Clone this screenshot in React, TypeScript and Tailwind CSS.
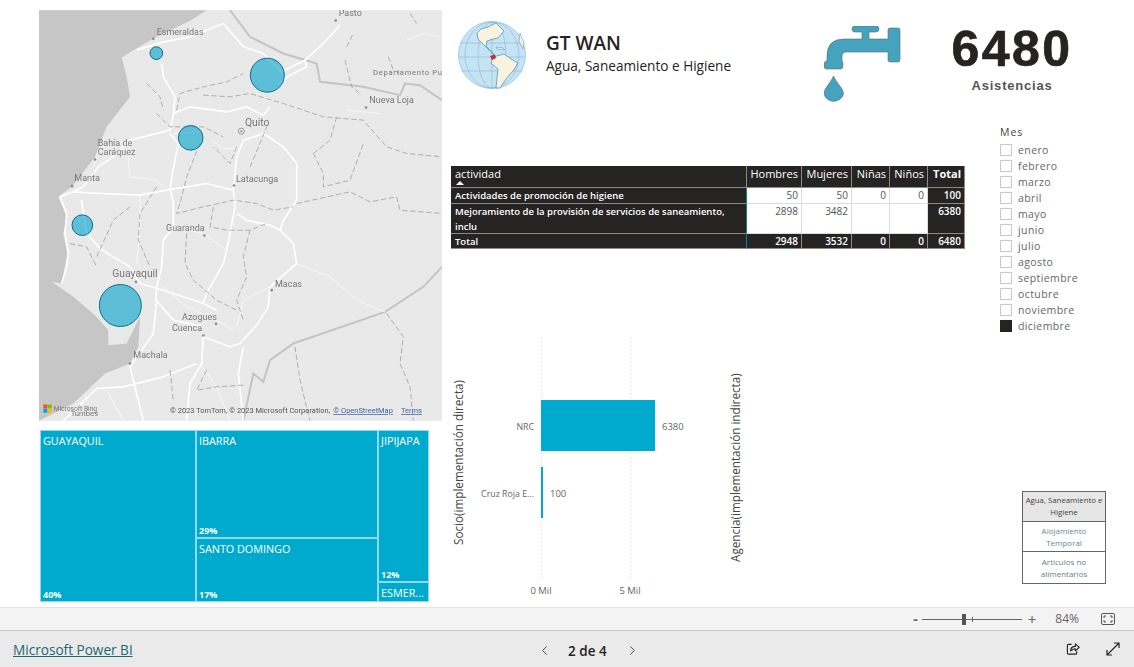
import { ChevronLeft, ChevronRight } from "lucide-react";

const meses = ["enero", "febrero", "marzo", "abril", "mayo", "junio", "julio", "agosto", "septiembre", "octubre", "noviembre", "diciembre"];

// el mapa usa coordenadas de 3x
const carreteras = [
  "M320 150 L400 125 L480 110 L580 70 L640 140 L700 160 L755 215 L825 180 L880 130 L930 75",
  "M825 180 L830 200 L780 225 L745 250",
  "M395 190 L400 230 L435 290 L430 345 L420 390 L300 420 L250 470 L205 500 L160 560 L130 575 L90 590",
  "M420 400 L445 430 L435 480 L420 560 L430 610 L430 680 L400 720 L395 800 L380 860 L378 900 L430 960 L520 980",
  "M430 340 L480 320 L590 335 L650 320 L700 345 L720 320",
  "M90 590 L110 640 L105 700 L115 760 L110 800 L95 850",
  "M155 600 L160 640 L170 700 L210 745 L250 770 L300 800 L330 850 L400 870 L460 890 L520 910 L560 930",
  "M130 575 L210 580 L330 585 L410 570 L470 560 L530 550 L610 570",
  "M610 570 L615 620 L600 700 L590 750 L580 790 L530 880 L520 910",
  "M620 640 L650 660 L720 675 L750 690 L790 730 L800 790 L720 860 L715 920 L680 975 L630 1030 L600 1040 L520 1010 L515 1090 L480 1150 L470 1262",
  "M610 570 L620 470 L640 420 L700 400 L760 440 L800 490 L800 600 L760 660 L750 690",
  "M640 1040 L625 1120 L640 1262",
  "M340 1262 L300 1100 L370 1000 L380 900",
  "M100 1262 L200 1165 L280 1160 L400 1130 L500 1090",
];
const finas = [
  "M430 400 L500 395 M545 420 L580 445 L620 445",
  "M300 425 L295 490 L300 530 L380 540 L410 570",
  "M330 585 L330 680 L320 790",
  "M190 500 L215 440 L300 420",
  "M430 680 L520 700 L590 750",
  "M400 860 L470 920 L560 960 L610 990",
  "M620 980 L640 900 L720 860",
  "M800 790 L900 830 L980 900 L1065 935",
  "M230 1170 L280 1262 M510 1090 L560 1160 L600 1262",
  "M950 330 L1050 340 M1130 120 L1180 100 L1230 110",
];
const punteadas = [
  "M440 330 L450 280 L520 260 L590 245 L640 220",
  "M520 285 L600 290 L660 280 L760 310 L880 350 L1000 360 L1070 440 L1130 460 L1236 470",
  "M950 140 L970 100 M945 180 L965 260 L990 280",
  "M1075 170 L1090 210 L1110 220 M1140 40 L1160 70",
  "M850 460 L900 420 L920 350 M850 460 L880 520 L880 560 L960 540 L1000 430",
  "M800 610 L960 575 L1020 605 L1100 590 L1110 630 L1236 640",
  "M510 430 L470 530 L450 610 L440 640 L520 620 L610 600 L680 610 L730 630 L790 620",
  "M550 620 L540 680 L590 690 L660 690 L710 670",
  "M660 690 L640 770 L650 830 L620 900 L640 960",
  "M470 700 L465 790 L490 840 L560 900 L620 930",
  "M380 560 L330 640 L325 720 L360 800 M300 620 L250 660 L200 770",
  "M620 440 L600 490 L550 440 M660 500 L690 430 L710 380",
  "M380 340 L420 380 L520 380 L580 410",
  "M420 1110 L430 1200 M530 1110 L500 1170 L560 1160 L640 1155",
  "M795 1040 L810 1140 L840 1262 M1070 940 L1120 1010 L1110 1090 L1140 1160 L1150 1262",
  "M350 250 L390 290 L400 330 M120 730 L170 740 L200 800",
];

function MapaEcuador() {
  return (
    <svg viewBox="27 30 1209 1232" className="block w-[403px] h-[411px] blur-[0.4px]" fontFamily="Roboto, sans-serif">
      <rect x="27" y="30" width="1209" height="1232" fill="#e9e9e9" />
      <path d="M27 30 L530 30 L480 62 L370 115 L310 150 L275 172 L290 230 L300 290 L230 380 L195 470 L130 555 L85 590 L110 650 L100 700 L112 760 L95 850 L65 845 L130 890 L200 950 L235 990 L235 1035 L290 1030 L330 950 L325 1040 L300 1090 L225 1120 L130 1210 L27 1262 Z" fill="#c6c6c6" />
      <path d="M1236 800 L1180 860 L1065 935 L790 1030 L720 1080 L700 1145 L670 1120 L640 1262" fill="none" stroke="#c4c4c4" strokeWidth="6" />
      <path d="M600 30 L660 110 L760 160 L860 190 L870 245 L1000 260 L1110 285 L1125 250 L1170 255 L1236 300" fill="none" stroke="#c4c4c4" strokeWidth="6" />
      {carreteras.map((d) => (
        <path key={d} d={d} fill="none" stroke="#ffffff" strokeWidth="5" strokeLinejoin="round" />
      ))}
      {finas.map((d) => (
        <path key={d} d={d} fill="none" stroke="#f8f8f8" strokeWidth="3" strokeLinejoin="round" />
      ))}
      {punteadas.map((d) => (
        <path key={d} d={d} fill="none" stroke="#a2a2a2" strokeWidth="2.5" strokeDasharray="16 8" />
      ))}
      <g fill="#777777" fontSize="27">
        <text x="926" y="47">Pasto</text>
        <text x="380" y="106">Esmeraldas</text>
        <text x="1029" y="225" fontSize="23" letterSpacing="2">Departamento Put</text>
        <text x="1018" y="309">Nueva Loja</text>
        <text x="645" y="377" fontSize="31">Quito</text>
        <text x="203" y="438">Bahía de</text>
        <text x="203" y="465">Caráquez</text>
        <text x="133" y="543">Manta</text>
        <text x="618" y="546">Latacunga</text>
        <text x="408" y="693">Guaranda</text>
        <text x="247" y="832" fontSize="31">Guayaquil</text>
        <text x="735" y="860">Macas</text>
        <text x="456" y="961">Azogues</text>
        <text x="426" y="994">Cuenca</text>
        <text x="310" y="1075">Machala</text>
        <text x="122" y="1247" fontSize="23">Tumbes</text>
      </g>
      <g fill="#8a8a8a">
        <circle cx="917" cy="61" r="4" />
        <circle cx="370" cy="116" r="4" />
        <circle cx="1008" cy="322" r="4" />
        <circle cx="195" cy="478" r="4" />
        <circle cx="126" cy="558" r="4" />
        <circle cx="612" cy="556" r="4" />
        <circle cx="523" cy="706" r="4" />
        <circle cx="725" cy="870" r="4" />
        <circle cx="558" cy="971" r="4" />
        <circle cx="520" cy="1006" r="4" />
        <circle cx="300" cy="1090" r="4" />
        <circle cx="318" cy="845" r="4" />
      </g>
      <circle cx="634" cy="393" r="9" fill="none" stroke="#8a8a8a" strokeWidth="2.5" />
      <circle cx="634" cy="393" r="3" fill="#8a8a8a" />
      <g fill="#00a3cc" fillOpacity="0.6" stroke="#0a6f8e" strokeWidth="3">
        <circle cx="379" cy="159" r="19" />
        <circle cx="712" cy="225" r="51" />
        <circle cx="482" cy="413" r="37" />
        <circle cx="157" cy="675" r="31" />
        <circle cx="271" cy="916" r="63" />
      </g>
      <rect x="40" y="1213" width="12" height="12" fill="#f25022" />
      <rect x="53" y="1213" width="12" height="12" fill="#7fba00" />
      <rect x="40" y="1226" width="12" height="12" fill="#00a4ef" />
      <rect x="53" y="1226" width="12" height="12" fill="#ffb900" />
      <text x="71" y="1233" fontSize="20" fill="#777777">Microsoft Bing</text>
      <g fontSize="22.4" fill="#555555">
        <text x="420" y="1239">© 2023 TomTom, © 2023 Microsoft Corporation,</text>
        <text x="910" y="1239" fill="#3f5fa8" textDecoration="underline">© OpenStreetMap</text>
        <text x="1113" y="1239" fill="#3f5fa8" textDecoration="underline">Terms</text>
      </g>
    </svg>
  );
}

function Tile({ nombre, pct, className }: { nombre: string; pct?: string; className: string }) {
  return (
    <div className={`flex flex-col justify-between bg-[#00a9ce] border border-[#8fd9ea] pl-[2px] pr-1 pt-[2px] text-white ${className}`}>
      <div className="text-[10.8px] leading-[16px] whitespace-nowrap">{nombre}</div>
      {pct && <div className="text-[9px] font-bold leading-[12px]">{pct}</div>}
    </div>
  );
}

function Treemap() {
  return (
    <div className="flex w-[389px] h-[172px] ml-[1px] mt-[9px]">
      <Tile nombre="GUAYAQUIL" pct="40%" className="w-[156px] shrink-0" />
      <div className="flex flex-col w-[182px] shrink-0">
        <Tile nombre="IBARRA" pct="29%" className="h-[108px]" />
        <Tile nombre="SANTO DOMINGO" pct="17%" className="flex-1" />
      </div>
      <div className="flex flex-col flex-1 min-w-0">
        <Tile nombre="JIPIJAPA" pct="12%" className="h-[152px]" />
        <Tile nombre="ESMER..." className="flex-1" />
      </div>
    </div>
  );
}

function Globo() {
  return (
    <svg viewBox="0 0 68 68" className="w-[68px] h-[68px] shrink-0 blur-[0.3px]">
      <circle cx="34" cy="34" r="33.5" fill="#c3e4f5" stroke="#a3d0e8" />
      <g fill="none" stroke="#93a9b8" strokeWidth="0.5">
        <ellipse cx="34" cy="34" rx="14" ry="33" />
        <ellipse cx="34" cy="34" rx="27" ry="33" />
        <path d="M34 1V67M2 22H66M1 36H67M3 50H65" />
      </g>
      <path d="M19 12 L23 8 L30 6 L38 2 L46 10 L40 17 L35 18 L29 20 L28 25 L33 30 L36 34 L29 27 L20 18 Z" fill="#f7f3df" stroke="#3c8fc0" strokeWidth="0.7" />
      <path d="M35 36 L46 33 L53 38 L60 42 L55 50 L48 58 L42 67 L38 67 L39 57 L40 48 L33 42 Z" fill="#f7f3df" stroke="#3c8fc0" strokeWidth="0.7" />
      <path d="M38 26 L45 27 L47 29 L39 28 Z M62 12 L66 22 L65 28 L61 20 Z" fill="#f7f3df" stroke="#3c8fc0" strokeWidth="0.5" />
      <path d="M32 35 L37 33.5 L38 37 L34 39 Z" fill="#c8283c" />
    </svg>
  );
}

function Grifo() {
  return (
    <svg viewBox="0 0 80 80" className="w-[80px] h-[80px] shrink-0">
      <g fill="#45a3bd" stroke="#5b6b72" strokeWidth="0.6">
        <path d="M28 3 Q28 0 31 0 H52 Q55 0 55 3 Q55 6 52 6 H45 V13 H64 V4 Q64 2 66 2 H74 Q76 2 76 4 V34 Q76 36 74 36 H66 Q64 36 64 34 V26 H22 Q18 26 18 30 V35 Q19 35 19 39 Q19 43 17 43 H2 Q0 43 0 39 Q0 35 3 35 V30 Q3 13 20 13 H38 V6 H31 Q28 6 28 3 Z" />
        <path d="M9.5 50 C13 58 19.5 62 19.5 68 A10 9.5 0 0 1 0 68 C0 62 6 58 9.5 50 Z" />
      </g>
    </svg>
  );
}

function Tabla() {
  const oscura = "bg-[#252423] text-white border-b border-r border-[#8a8a8a] px-[3px]";
  const clara = "bg-white text-[#555] border-b border-r border-[#dcdcdc] px-[3px] text-[10px] text-right";
  const num = `${oscura} text-[10px] text-right font-semibold`;
  const fila = `${oscura} pl-[4px] font-semibold border-r-[#0f7f96]`;
  return (
    <div className="grid grid-cols-[296px_55px_50px_38px_38px_37px] grid-rows-[22px_16px_30px_15px] w-[514px] text-[9.5px] leading-[15px]">
      <div className={`${oscura} text-[11px] leading-[14px] relative pl-[4px] pt-[1px]`}>
        actividad
        <div className="absolute left-[5px] top-[15px] w-0 h-0 border-x-[4px] border-x-transparent border-b-[4px] border-b-white" />
      </div>
      {["Hombres", "Mujeres", "Niñas", "Niños"].map((h) => (
        <div key={h} className={`${oscura} text-[11px] leading-[14px] text-right pt-[1px] whitespace-nowrap overflow-hidden`}>{h}</div>
      ))}
      <div className={`${oscura} text-[11px] leading-[14px] text-right font-bold pt-[1px]`}>Total</div>

      <div className={fila}>Actividades de promoción de higiene</div>
      <div className={clara}>50</div>
      <div className={clara}>50</div>
      <div className={clara}>0</div>
      <div className={clara}>0</div>
      <div className={num}>100</div>

      <div className={fila}>Mejoramiento de la provisión de servicios de saneamiento, inclu</div>
      <div className={clara}>2898</div>
      <div className={clara}>3482</div>
      <div className={clara} />
      <div className={clara} />
      <div className={num}>6380</div>

      <div className={fila}>Total</div>
      <div className={num}>2948</div>
      <div className={num}>3532</div>
      <div className={num}>0</div>
      <div className={num}>0</div>
      <div className={num}>6480</div>
    </div>
  );
}

function GraficoBarras() {
  return (
    <svg viewBox="0 0 300 270" className="block w-[300px] h-[270px] mt-[81px]" fontFamily="'Open Sans', sans-serif">
      <path d="M90.5 7V250M179.5 7V250" stroke="#d9d9d9" strokeDasharray="1 3" />
      <rect x="90" y="70" width="114" height="51" fill="#00a9ce" />
      <rect x="90" y="137" width="2" height="51" fill="#00a9ce" />
      <g fill="#666666" fontSize="8.8" textAnchor="end">
        <text x="83" y="100">NRC</text>
        <text x="83" y="167">Cruz Roja E...</text>
      </g>
      <g fill="#666666" fontSize="9.5">
        <text x="211" y="100">6380</text>
        <text x="99" y="167">100</text>
        <text x="90" y="264" textAnchor="middle">0 Mil</text>
        <text x="179" y="264" textAnchor="middle">5 Mil</text>
      </g>
      <g fill="#444444" fontSize="11.7">
        <text transform="translate(12 215) rotate(-90)">Socio(implementación directa)</text>
        <text transform="translate(289 232) rotate(-90)">Agencia(implementación indirecta)</text>
      </g>
    </svg>
  );
}

function Meses() {
  return (
    <div className="flex flex-col -mt-[2px] text-[10.5px] leading-[16px] text-[#666] tracking-[0.4px]">
      <div className="text-[#444] mb-[2px] tracking-[1px]">Mes</div>
      {meses.map((m) => (
        <div key={m} className="flex items-center gap-[6px] h-[16px]">
          <div className={m === "diciembre" ? "w-[12px] h-[12px] bg-[#252423]" : "w-[12px] h-[12px] border border-[#c8c8c8] bg-white"} />
          <span>{m}</span>
        </div>
      ))}
    </div>
  );
}

function Botones() {
  return (
    <div className="flex flex-col w-[84px] h-[93px] ml-[22px] mt-[157px] border border-[#666] text-[8px] leading-[11.5px] text-center">
      <div className="h-[30px] bg-[#e6e6e6] border-b border-[#666] text-[7.8px] text-[#444] flex items-center justify-center">Agua, Saneamiento e Higiene</div>
      <div className="h-[30px] border-b border-[#666] text-[#5f8a96] flex items-center justify-center px-3">Alojamiento Temporal</div>
      <div className="flex-1 text-[#5f7f8a] flex items-center justify-center px-2">Artículos no alimentarios</div>
    </div>
  );
}

export default function App() {
  return (
    <div className="flex flex-col w-[1134px] h-[667px] bg-white overflow-hidden font-['Open_Sans',sans-serif]">
      <div className="flex h-[607px]">
        <div className="w-[451px] pl-[39px] pt-[10px] shrink-0">
          <MapaEcuador />
          <Treemap />
        </div>
        <div className="flex flex-col flex-1 min-w-0">
          <div className="flex h-[126px] pl-[7px] pt-[21px]">
            <Globo />
            <div className="ml-[20px] pt-[9px] w-[278px] shrink-0">
              <div className="text-[19px] leading-[26px] font-semibold text-[#252423]">GT WAN</div>
              <div className="text-[13.6px] leading-[20px] text-[#252423]">Agua, Saneamiento e Higiene</div>
            </div>
            <div className="pt-[5px]"><Grifo /></div>
            <div className="ml-[47px] w-[122px] flex flex-col items-center font-['Liberation_Sans',sans-serif] font-bold">
              <div className="text-[50px] leading-[56px] tracking-[2.5px] text-[#252423] [-webkit-text-stroke:0.7px_#252423]">6480</div>
              <div className="text-[13px] leading-[18px] tracking-[0.8px] text-[#555]">Asistencias</div>
            </div>
          </div>
          <div className="flex flex-1">
            <div className="w-[549px] shrink-0 pt-[40px]">
              <Tabla />
              <GraficoBarras />
            </div>
            <div className="flex flex-col">
              <Meses />
              <Botones />
            </div>
          </div>
        </div>
      </div>
      <div className="flex items-center justify-end h-[24px] bg-[#f3f3f3] border-t border-t-[#e3e3e3] border-b border-b-[#c8c8c8] text-[#666] pr-[19px]">
        <span className="text-[14px] font-bold leading-none mr-[4px]">-</span>
        <div className="relative w-[100px] h-px bg-[#666] mr-[6px]">
          <div className="absolute left-[40px] top-[-5px] w-[4px] h-[11px] bg-[#555]" />
          <div className="absolute left-[50px] top-[-2px] w-px h-[5px] bg-[#666]" />
        </div>
        <span className="text-[15px] leading-none mr-[19px]">+</span>
        <span className="text-[12px] mr-[22px]">84%</span>
        <svg viewBox="0 0 14 12" className="w-[14px] h-[12px]" fill="none" stroke="#555" strokeWidth="1">
          <rect x="0.5" y="0.5" width="13" height="11" rx="1.5" />
          <path d="M3 5V3H5M9 3H11V5M11 7V9H9M5 9H3V7" />
        </svg>
      </div>
      <div className="relative flex items-center justify-between flex-1 bg-[#eaeaea] pl-[13px] pr-[14px]">
        <a href="#" className="text-[13.6px] mt-[2px] text-[#1a6b72] underline">Microsoft Power BI</a>
        <div className="absolute left-[537px] top-[12px] flex items-center text-[#252423]">
          <ChevronLeft size={15} strokeWidth={1.5} className="text-[#444]" />
          <span className="text-[13.5px] font-semibold leading-[14px] ml-[16px] mr-[18px]">2 de 4</span>
          <ChevronRight size={15} strokeWidth={1.5} className="text-[#444]" />
        </div>
        <div className="flex items-center gap-[26px] text-[#252423]">
          <svg viewBox="0 0 15 15" className="w-[14px] h-[14px]" fill="none" stroke="currentColor" strokeWidth="1.2">
            <path d="M6 2.5H2.5A1 1 0 0 0 1.5 3.5V12A1 1 0 0 0 2.5 13H10.5A1 1 0 0 0 11.5 12V10" />
            <path d="M5 9.5C5 6.5 7 4.7 10 4.7V2L14.2 5.8L10 9.4V7.2C8 7.2 6.5 8 5 9.5Z" strokeLinejoin="round" />
          </svg>
          <svg viewBox="0 0 14 14" className="w-[14px] h-[14px]" fill="none" stroke="currentColor" strokeWidth="1.2">
            <path d="M1 13L13 1M8 1H13V6M1 8V13H6" />
          </svg>
        </div>
      </div>
    </div>
  );
}
